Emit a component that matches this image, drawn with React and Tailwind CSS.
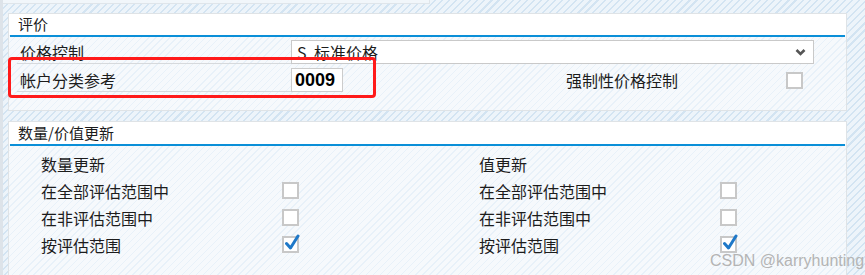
import React from "react";

const font = { fontFamily: '"Noto Sans CJK SC", "Noto Sans", sans-serif' };

function Box({ checked }) {
  return (
    <div className="relative w-[17px] h-[17px] border-2 border-[#c8c8c8] bg-white">
      {checked && (
        <svg className="absolute left-[1px] top-[-4px]" width="15" height="17" viewBox="0 0 15 17">
          <path d="M1.5 9.5 L5.5 14 L13 2" fill="none" stroke="#1e78c8" strokeWidth="3" strokeLinecap="round" strokeLinejoin="round" />
        </svg>
      )}
    </div>
  );
}

function Row({ label, checked }) {
  return (
    <div className="h-[27px] flex items-center">
      <div className="w-[241px] shrink-0 text-[16px] text-[#1c1c1c]">{label}</div>
      <Box checked={checked} />
    </div>
  );
}

function Column({ title, className }) {
  return (
    <div className={className}>
      <div className="h-[27px] flex items-center text-[16px] text-[#1c1c1c]">{title}</div>
      <Row label="在全部评估范围中" />
      <Row label="在非评估范围中" />
      <Row label="按评估范围" checked />
    </div>
  );
}

export default function App() {
  return (
    <div
      className="relative w-[865px] h-[275px] overflow-hidden border-l-[3px] border-[#dde3e9] bg-[repeating-linear-gradient(135deg,#d3e4f2_0px,#d3e4f2_1.5px,#edf4fa_1.5px,#edf4fa_5px)]"
      style={font}
    >
      <div className="h-[4px] w-[427px] border-r border-b border-[#dfe5ea] bg-[#f1f6fa]" />
      {/* Panel 1 */}
      <div className="ml-[5px] mt-[9px] w-[839px] h-[98px] border border-[#dfe3e6] flex flex-col bg-[repeating-linear-gradient(135deg,#e8f1f9_0px,#e8f1f9_1px,#f6f9fc_1px,#f6f9fc_5px)]">
        <div className="h-[21px] bg-white flex items-center pl-[9px] text-[15px] text-[#1c1c1c]">评价</div>
        <div className="h-[2px] mx-[1px] bg-[#0a8fd8]" />
        <div className="flex flex-col pt-[3px] gap-[4px]">
          <div className="flex h-[24px]">
            <div className="ml-[8px] w-[274px] border-b border-[#d6d9dc] pl-[3px] flex items-center text-[16px] text-[#1c1c1c]">价格控制</div>
            <div className="w-[523px] h-[24px] border border-[#c9c9c9] bg-white flex items-center pl-[5px] text-[16px] text-[#1c1c1c]">
              <span className="flex-1 [word-spacing:4px]">S 标准价格</span>
              <svg className="mr-[7px]" width="11" height="8" viewBox="0 0 11 8">
                <path d="M1.5 2 L5.5 6 L9.5 2" fill="none" stroke="#555" strokeWidth="2.6" />
              </svg>
            </div>
          </div>
          <div className="flex h-[24px] items-stretch">
            <div className="ml-[8px] w-[274px] border-b border-[#d6d9dc] pl-[3px] flex items-center text-[16px] text-[#1c1c1c]">帐户分类参考</div>
            <div className="w-[52px] border border-[#cccccc] bg-white flex items-center pl-[3px] text-[18px] font-bold text-black" style={{ fontFamily: '"Liberation Sans", sans-serif' }}>0009</div>
            <div className="ml-[223px] w-[220px] flex items-center text-[16px] text-[#1c1c1c]">强制性价格控制</div>
            <div className="flex items-center">
              <Box />
            </div>
          </div>
        </div>
      </div>
      {/* Panel 2 */}
      <div className="ml-[5px] mt-[10px] w-[839px] h-[160px] border border-[#dfe3e6] flex flex-col bg-[repeating-linear-gradient(135deg,#e8f1f9_0px,#e8f1f9_1px,#f6f9fc_1px,#f6f9fc_5px)]">
        <div className="h-[22px] bg-white flex items-center pl-[9px] text-[15px] text-[#1c1c1c]">数量/价值更新</div>
        <div className="h-[2px] mx-[1px] bg-[#0a8fd8]" />
        <div className="flex pt-[4px] pl-[32px]">
          <Column title="数量更新" className="w-[438px] shrink-0 flex flex-col" />
          <Column title="值更新" className="flex-1 flex flex-col" />
        </div>
      </div>
      {/* Annotation */}
      <div className="absolute left-[5px] top-[57px] w-[368px] h-[41px] border-[3px] border-[#ff1a1a] rounded-[4px]" />
      <div
        className="absolute left-[707px] top-[249px] text-[16px] text-[#b4b4b4] whitespace-nowrap"
        style={{ fontFamily: '"Liberation Sans", sans-serif' }}
      >
        CSDN @karryhunting
      </div>
    </div>
  );
}
